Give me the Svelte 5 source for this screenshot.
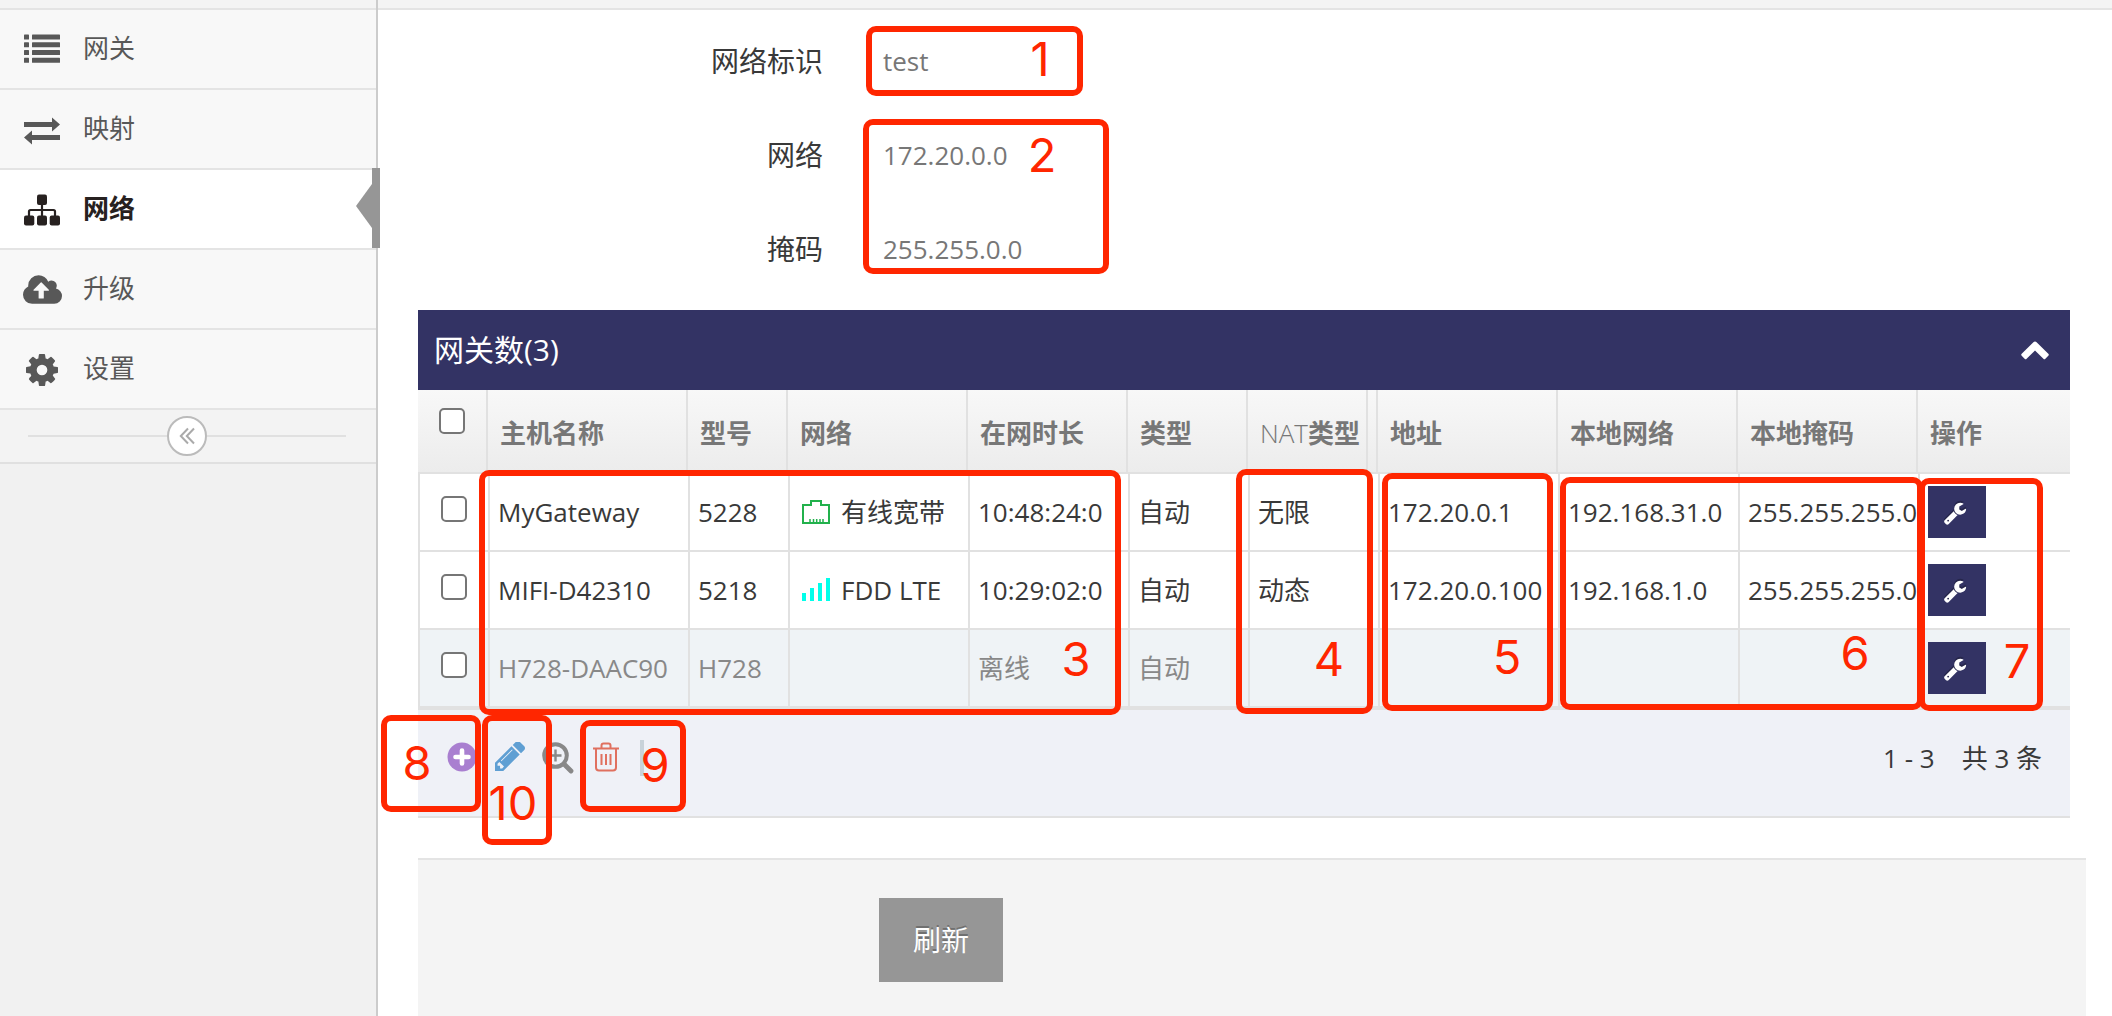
<script>
  const menu = [
    { id: 'list', label: '网关' },
    { id: 'exchange', label: '映射' },
    { id: 'sitemap', label: '网络', active: true },
    { id: 'upload', label: '升级' },
    { id: 'cog', label: '设置' },
  ];

  const fields = [
    { label: '网络标识', value: 'test' },
    { label: '网络', value: '172.20.0.0' },
    { label: '掩码', value: '255.255.0.0' },
  ];

  const columns = ['主机名称', '型号', '网络', '在网时长', '类型', 'NAT类型', '', '地址', '本地网络', '本地掩码', '操作'];

  const rows = [
    { name: 'MyGateway', model: '5228', icon: 'wired', net: '有线宽带', time: '10:48:24:0', type: '自动', nat: '无限', ip: '172.20.0.1', lan: '192.168.31.0', mask: '255.255.255.0' },
    { name: 'MIFI-D42310', model: '5218', icon: 'signal', net: 'FDD LTE', time: '10:29:02:0', type: '自动', nat: '动态', ip: '172.20.0.100', lan: '192.168.1.0', mask: '255.255.255.0' },
    { name: 'H728-DAAC90', model: 'H728', icon: '', net: '', time: '离线', type: '自动', nat: '', ip: '', lan: '', mask: '', offline: true },
  ];

  // Callouts float over the page: frame box plus the centre of its number.
  const notes = [
    { n: '1', x: 866, y: 26, w: 217, h: 70, cx: 1040, cy: 59 },
    { n: '2', x: 863, y: 119, w: 246, h: 155, cx: 1042, cy: 155 },
    { n: '3', x: 479, y: 470, w: 642, h: 245, cx: 1076, cy: 659 },
    { n: '4', x: 1236, y: 469, w: 137, h: 245, cx: 1329, cy: 659 },
    { n: '5', x: 1382, y: 473, w: 171, h: 238, cx: 1507, cy: 657 },
    { n: '6', x: 1560, y: 477, w: 363, h: 233, cx: 1855, cy: 653 },
    { n: '7', x: 1919, y: 478, w: 124, h: 233, cx: 2017, cy: 661 },
    { n: '8', x: 381, y: 715, w: 100, h: 97, cx: 417, cy: 763 },
    { n: '10', x: 482, y: 715, w: 70, h: 130, cx: 513, cy: 803 },
    { n: '9', x: 580, y: 720, w: 106, h: 92, cx: 655, cy: 765 },
  ];
</script>

<div class="page">
  <div class="topbar"></div>
  <div class="body">
    <aside class="sidebar">
      {#each menu as m}
        <a class="item" class:active={m.active} href="#{m.id}">
          <span class="mi {m.id}">
            {#if m.id === 'list'}
              <svg width="36" height="30" viewBox="0 0 36 30">
                {#each [0, 1, 2, 3] as i}
                  <rect x="0" y={0.6 + i * 7.75} width="5" height="5" rx=".6" />
                  <rect x="8" y={0.6 + i * 7.75} width="28" height="5" rx=".6" />
                {/each}
              </svg>
            {:else if m.id === 'exchange'}
              <svg width="36" height="28" viewBox="0 0 36 28"><path d="M0 5h28V0.5L36 7.500 28 14.500V10H0zM36 18H8v-4.500L0 20.500 8 27.500V23h28z" /></svg>
            {:else if m.id === 'sitemap'}
              <svg width="36" height="32" viewBox="0 0 36 32">
                <rect x="13" y="0.500" width="10" height="10.500" rx="2" />
                <rect x="0" y="21.500" width="10.300" height="10" rx="2" />
                <rect x="13" y="21.500" width="10" height="10" rx="2" />
                <rect x="25.700" y="21.500" width="10.300" height="10" rx="2" />
                <path d="M18 10v12M5 22v-4.500q0-1.500 1.500-1.500h23q1.500 0 1.500 1.500V22" fill="none" stroke="currentColor" stroke-width="2.200" />
              </svg>
            {:else if m.id === 'upload'}
              <svg width="39" height="29" viewBox="0 192 1920 1408"><path d="M1280 928q0-14-9-23l-352-352q-9-9-23-9t-23 9l-351 351q-10 12-10 24 0 14 9 23t23 9h224v352q0 13 9.500 22.500t22.500 9.500h192q13 0 22.500-9.500t9.500-22.500v-352h224q13 0 22.500-9.500t9.500-22.500zm640 288q0 159-112.500 271.500t-271.500 112.500h-1088q-185 0-316.500-131.500t-131.500-316.500q0-130 70-240t188-165q-2-30-2-43 0-212 150-362t362-150q156 0 285.500 87t188.500 231q71-62 166-62 106 0 181 75t75 181q0 76-41 138 130 31 213.500 135.500t83.500 238.500z" /></svg>
            {:else}
              <svg width="32" height="32" viewBox="0 -128 1536 1536"><path fill-rule="evenodd" d="M1024 640q0 106-75 181t-181 75-181-75-75-181 75-181 181-75 181 75 75 181zm512-109v222q0 12-8 23t-20 13l-185 28q-19 54-39 91 35 50 107 138 10 12 10 25t-9 23q-27 37-99 108t-94 71q-12 0-26-9l-138-108q-44 23-91 38-16 136-29 186-7 28-36 28h-222q-14 0-24.500-8.500t-11.500-21.500l-28-184q-49-16-90-37l-141 107q-10 9-25 9-14 0-25-11-126-114-165-168-7-10-7-23 0-12 8-23 15-21 51-66.500t54-70.500q-27-50-41-99l-183-27q-13-2-21-12.500t-8-23.500v-222q0-12 8-23t19-13l186-28q14-46 39-92-40-57-107-138-10-12-10-24 0-10 9-23 26-36 98.500-107.500t94.500-71.500q13 0 26 10l138 107q44-23 91-38 16-136 29-186 7-28 36-28h222q14 0 24.500 8.500t11.500 21.500l28 184q49 16 90 37l142-107q9-9 24-9 13 0 25 10 129 119 165 170 7 8 7 22 0 12-8 23-15 21-51 66.500t-54 70.500q26 50 41 98l183 28q13 2 21 12.500t8 23.500z" /></svg>
            {/if}
          </span>
          <span class="ml">{m.label}</span>
        </a>
      {/each}
      <div class="collapse">
        <span class="rule"></span>
        <button class="toggle" aria-label="collapse">
          <svg width="16" height="18" viewBox="0 0 16 18"><path d="M9 1.500L1.800 9 9 16.500M15 1.500L7.800 9l7.200 7.500" fill="none" stroke="#aaa" stroke-width="2" /></svg>
        </button>
        <span class="rule"></span>
      </div>
    </aside>

    <main>
      <div class="form">
        {#each fields as f}
          <div class="field"><span class="fl">{f.label}</span><span class="fv">{f.value}</span></div>
        {/each}
      </div>

      <section class="grid">
        <header class="title">
          <span>网关数(3)</span>
          <svg width="28" height="19" viewBox="0 0 28 19"><path d="M14 .5q.9 0 1.600.7l11.700 11.600q1 1 0 2l-2.900 2.900q-1 1-2 0L14 9.600l-8.400 8.100q-1 1-2 0L.7 14.800q-1-1 0-2L12.400 1.200Q13.100.5 14 .5z" fill="#fff" /></svg>
        </header>
        <div class="row head">
          <div class="cell ck"><span class="box"></span></div>
          {#each columns as c}
            <div class="cell">{#if c.startsWith('NAT')}<span class="thin">NAT</span>类型{:else}{c}{/if}</div>
          {/each}
        </div>
        {#each rows as r}
          <div class="row data" class:offline={r.offline}>
            <div class="cell ck"><span class="box"></span></div>
            <div class="cell">{r.name}</div>
            <div class="cell">{r.model}</div>
            <div class="cell net">
              {#if r.icon === 'wired'}
                <svg width="28" height="26" viewBox="0 0 28 26"><path d="M1 6h8V2h10v4h8v18H1z" fill="none" stroke="#22b14c" stroke-width="2" /><path d="M8 23v-3M11.500 23v-3M14.700 23v-3M18 23v-3M21 23v-3" stroke="#22b14c" stroke-width="1.500" /></svg>
              {:else if r.icon === 'signal'}
                <svg width="28" height="26" viewBox="0 0 28 26" fill="#00ffea"><rect y="16" width="4" height="8" /><rect x="8" y="11" width="4" height="13" /><rect x="16" y="6" width="4" height="18" /><rect x="24" y="1" width="4" height="23" /></svg>
              {/if}
              {r.net}
            </div>
            <div class="cell">{r.time}</div>
            <div class="cell">{r.type}</div>
            <div class="cell">{r.nat}</div>
            <div class="cell"></div>
            <div class="cell">{r.ip}</div>
            <div class="cell">{r.lan}</div>
            <div class="cell">{r.mask}</div>
            <div class="cell">
              <button class="tool" aria-label="tool">
                <svg width="24" height="24" viewBox="0 0 1792 1792"><path d="M448 1472q0-26-19-45t-45-19-45 19-19 45 19 45 45 19 45-19 19-45zm644-420l-682 682q-37 37-90 37-52 0-91-37l-106-108q-38-36-38-90 0-53 38-91l681-681q39 98 114.500 173.500t173.500 114.500zm634-435q0 39-23 106-47 134-164.500 217.500t-258.500 83.500q-185 0-316.500-131.500t-131.500-316.500 131.500-316.500 316.500-131.500q58 0 121.500 16.500t107.500 46.500q16 11 16 28t-16 28l-293 169v224l193 107q5-3 79-48.500t135.500-81 70.500-35.500q15 0 23.500 10t8.500 25z" fill="#fff" /></svg>
              </button>
            </div>
          </div>
        {/each}
        <footer class="pager">
          <div class="icons">
            <svg width="30" height="30" viewBox="0 0 30 30"><circle cx="15" cy="15" r="14.500" fill="#a97fd0" /><path d="M15 8.500v13M8.500 15h13" stroke="#fff" stroke-width="4.600" stroke-linecap="round" /></svg>
            <svg class="pen" width="30" height="30" viewBox="128 256 1515 1408"><path d="M491 1536l91-91-235-235-91 91v107h128v128h107zm523-928q0-22-22-22-10 0-17 7l-542 542q-7 7-7 17 0 22 22 22 10 0 17-7l542-542q7-7 7-17zm-54-192l416 416-832 832h-416v-416zm683 96q0 53-37 90l-166 166-416-416 166-165q36-38 90-38 53 0 91 38l235 234q37 39 37 91z" fill="#5f9fd3" /></svg>
            <svg class="mag" width="32" height="32" viewBox="0 0 32 32" fill="none" stroke="#888"><circle cx="13.500" cy="13.500" r="11.300" stroke-width="4" /><path d="M22.500 22.500l6.500 6.500" stroke-width="4.800" stroke-linecap="round" /><path d="M13.500 7.500v12M7.500 13.500h12" stroke-width="2.400" /></svg>
            <svg class="bin" width="26" height="30" viewBox="0 0 26 30" fill="none" stroke="#e0705f" stroke-width="2"><path d="M0 6.500h26M8.500 6V3.500q0-2 2-2h5q2 0 2 2V6M3 7v18.500q0 3 3 3h14q3 0 3-3V7M8.500 12v11M13 12v11M17.500 12v11" /></svg>
            <span class="sep"></span>
          </div>
          <div class="count"><span>1 - 3</span><span>共 3 条</span></div>
        </footer>
      </section>

      <div class="actions"><button class="refresh">刷新</button></div>
    </main>
  </div>

  {#each notes as a}
    <div class="frame" style="left:{a.x}px;top:{a.y}px;width:{a.w}px;height:{a.h}px"></div>
    <div class="num" style="left:{a.cx}px;top:{a.cy}px">{a.n}</div>
  {/each}
</div>

<style>
  :global(body) { margin: 0; background: #fff; }
  .page {
    position: relative; width: 2112px; height: 1016px; overflow: hidden;
    display: flex; flex-direction: column; box-sizing: border-box;
    font: 26px/36px 'Open Sans', 'Noto Sans CJK SC', sans-serif; color: #393939;
  }
  .page * { box-sizing: border-box; }
  button { border: 0; padding: 0; font: inherit; }
  svg { display: block; flex: none; }
  .topbar { height: 10px; flex: none; background: #f4f4f4; border-bottom: 2px solid #e4e4e4; }
  .body { flex: 1; display: flex; }

  .sidebar { width: 378px; flex: none; background: #f1f1f1; border-right: 2px solid #ccc; margin-top: -10px; }
  .sidebar::before { content: ''; display: block; box-sizing: border-box; height: 10px; background: #f4f4f4; border-bottom: 2px solid #e4e4e4; }
  .item { position: relative; display: flex; align-items: center; height: 80px; padding-left: 22px; background: #f8f8f8; border-bottom: 2px solid #e4e4e4; color: #585858; text-decoration: none; }
  .item.active { background: #fff; color: #272120; font-weight: 700; }
  .item.active::before { content: ''; position: absolute; right: -4px; top: -2px; width: 8px; height: 80px; background: #969696; }
  .item.active::after { content: ''; position: absolute; right: 4px; top: 14px; border: solid transparent; border-width: 22px 16px 22px 0; border-right-color: #969696; }
  .mi { width: 40px; display: flex; justify-content: center; fill: currentColor; }
  .ml { margin-left: 21px; padding-bottom: 3px; }
  .exchange { padding-top: 4px; }
  .sitemap, .cog { padding-top: 2px; }
  .collapse { display: flex; align-items: center; height: 54px; padding: 0 30px 0 28px; background: #f3f3f3; border-bottom: 2px solid #e0e0e0; }
  .rule { flex: 1; height: 2px; background: #e0e0e0; }
  .toggle { width: 40px; height: 40px; border: 2px solid #bbb; border-radius: 50%; background: #fff; display: flex; align-items: center; justify-content: center; }

  main { flex: 1; display: flex; flex-direction: column; padding-left: 40px; }
  .form { padding-top: 4px; height: 300px; }
  .field { display: flex; align-items: center; height: 94px; }
  .fl { width: 405px; text-align: right; font-size: 28px; }
  .fv { padding-left: 60px; color: #777; }

  .grid { width: 1652px; }
  .title { display: flex; align-items: center; justify-content: space-between; height: 80px; padding: 0 21px 0 16px; background: #333364; color: #fff; font-size: 30px; }
  .row { display: grid; grid-template-columns: 70px 200px 100px 180px 160px 120px 120px 10px 180px 180px 180px 1fr; border-bottom: 2px solid #e1e1e1; }
  .cell { display: flex; align-items: center; border-right: 2px solid #e1e1e1; white-space: nowrap; min-width: 0; }
  .cell:last-child { border-right: 0; }
  .head { height: 84px; background: linear-gradient(#f8f8f8, #ececec); color: #777; font-weight: 700; }
  .head .cell { padding: 3px 0 0 12px; }
  .head .cell:nth-child(8) { padding: 0; }
  .thin { font-weight: 300; }
  .data { height: 78px; border-left: 2px solid #e1e1e1; }
  .data .cell { padding-left: 8px; }
  .data .cell:nth-child(8) { padding: 0; }
  .offline { background: #eff3f6; color: #888; height: 80px; border-bottom-width: 4px; }
  .head .ck { align-items: flex-start; padding: 18px 0 0 21px; }
  .data .ck { align-items: flex-start; padding: 22px 0 0 21px; }
  .box { width: 26px; height: 26px; border: 2px solid #767676; border-radius: 5px; background: #fff; }
  .net { gap: 11px; }
  .data .net { padding-left: 12px; }
  .tool { width: 58px; height: 52px; background: #333364; display: flex; align-items: center; justify-content: center; padding: 2px 4px 0 0; }
  .tool svg { filter: drop-shadow(0 -2px 0 rgba(0, 0, 0, .25)); }

  .pager { display: flex; justify-content: space-between; height: 108px; padding: 32px 28px 0 29px; background: #eff1f7; border-bottom: 2px solid #e1e1e1; }
  .icons { display: flex; align-items: flex-start; }
  .icons svg { margin-right: 18px; }
  .icons .pen { margin-right: 17px; }
  .icons .mag { margin-right: 19px; }
  .icons .bin { margin-right: 21px; }
  .sep { width: 4px; height: 36px; margin-top: -2px; background: #c8d2d9; }
  .count { display: flex; gap: 27px; height: 36px; margin-top: -2px; }

  .actions { margin-top: 40px; flex: 1; width: 1668px; padding: 38px 0 0 461px; background: #f4f4f4; border-top: 2px solid #e4e4e4; }
  .refresh { display: block; width: 124px; height: 84px; background: #969696; color: #fff; font-size: 28px; text-shadow: 0 -2px 0 rgba(0, 0, 0, .25); }

  .frame { position: absolute; border: 6px solid #ff2600; border-radius: 10px; }
  .num { position: absolute; transform: translate(-50%, -50%); color: #ff2600; font: 400 47px/48px Inter, sans-serif; }
</style>
